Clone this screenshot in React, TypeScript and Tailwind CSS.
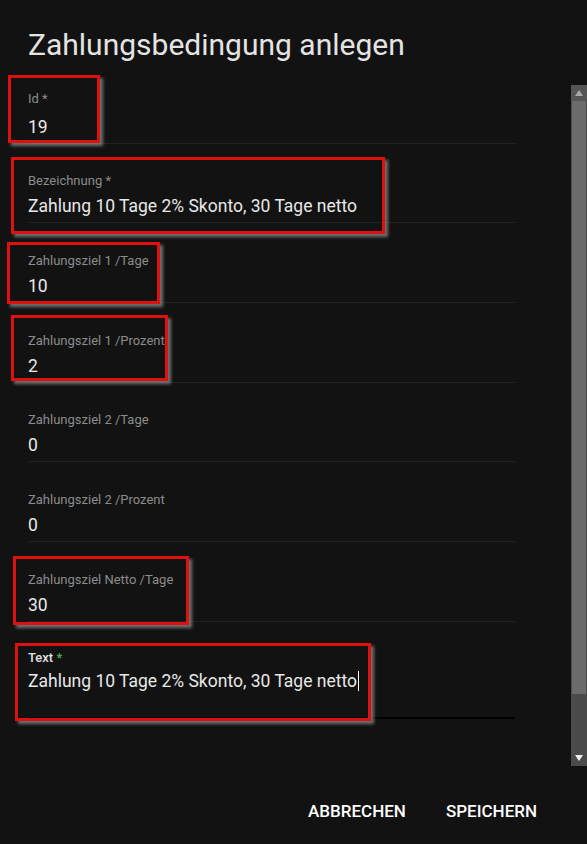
import React from "react";

type Field = {
  label: string;
  value: string;
  required?: boolean;
  pt: string;
};

const fields: Field[] = [
  { label: "Bezeichnung", value: "Zahlung 10 Tage 2% Skonto, 30 Tage netto", required: true, pt: "pt-[30px]" },
  { label: "Zahlungsziel 1 /Tage", value: "10", pt: "pt-[31px]" },
  { label: "Zahlungsziel 1 /Prozent", value: "2", pt: "pt-[31px]" },
  { label: "Zahlungsziel 2 /Tage", value: "0", pt: "pt-[30px]" },
  { label: "Zahlungsziel 2 /Prozent", value: "0", pt: "pt-[31px]" },
  { label: "Zahlungsziel Netto /Tage", value: "30", pt: "pt-[31px]" },
];

// red annotation frames drawn over the screenshot
const marks = [
  { left: 8, top: 75, width: 92, height: 68 },
  { left: 11, top: 157, width: 374, height: 77 },
  { left: 7, top: 242, width: 153, height: 62 },
  { left: 11, top: 315, width: 157, height: 66 },
  { left: 13, top: 556, width: 176, height: 69 },
  { left: 15, top: 643, width: 356, height: 78 },
];

function Scrollbar() {
  return (
    <div className="flex w-4 flex-col bg-[#4b4b4b]">
      <div className="flex h-4 items-center justify-center bg-[#555]">
        <svg width="8" height="6" viewBox="0 0 8 6">
          <path d="M4 0 L8 6 L0 6 Z" fill="#a8a8a8" />
        </svg>
      </div>
      <div className="mx-[1px] h-[593px] bg-[#6c6c6c]" />
      <div className="flex-1" />
      <div className="flex h-4 items-center justify-center">
        <svg width="8" height="6" viewBox="0 0 8 6">
          <path d="M0 0 L8 0 L4 6 Z" fill="#f0f0f0" />
        </svg>
      </div>
    </div>
  );
}

export default function App() {
  return (
    <div
      className="relative h-[844px] w-[587px] overflow-hidden bg-[#121212] text-[#e8e8e8]"
      style={{ fontFamily: "Roboto, 'Liberation Sans', sans-serif" }}
    >
      <div className="h-[85px] pl-[28px] pt-[27px]">
        <h1 className="text-[30px] leading-[36px] font-normal text-[#e4e4e4]">Zahlungsbedingung anlegen</h1>
      </div>

      <div className="flex h-[681px]">
        <div className="flex-1 pl-[28px] pr-[56px]">
          <div className="border-b border-[#222] pt-[7px] pb-[6px]">
            <div className="text-[13px] leading-[14px] text-[#8c8c8c]">Id *</div>
            <div className="mt-[11px] text-[17.5px] leading-[20px]">19</div>
          </div>

          {fields.map((f) => (
            <div key={f.label} className={`border-b border-[#222] pb-[6px] ${f.pt}`}>
              <div className="text-[13px] leading-[14px] text-[#8c8c8c]">
                {f.label}
                {f.required ? " *" : ""}
              </div>
              <div className="mt-[8px] text-[17.5px] leading-[20px]">{f.value}</div>
            </div>
          ))}

          <div className="border-b-2 border-black pt-[29px] pb-[26px]">
            <div className="text-[13px] leading-[14px] font-medium text-[#e0e0e0]">
              Text <span className="text-[#4caf50]">*</span>
            </div>
            <div className="mt-[6px] flex items-center text-[17.5px] leading-[20px]">
              Zahlung 10 Tage 2% Skonto, 30 Tage netto
              <span className="ml-[1px] inline-block h-[20px] w-[1px] bg-white" />
            </div>
          </div>
        </div>
        <Scrollbar />
      </div>

      <div className="flex justify-end gap-[24px] pr-[42px] pt-[29px]">
        <button className="px-[8px] py-[6px] text-[17px] leading-[20px] font-medium text-white">ABBRECHEN</button>
        <button className="px-[8px] py-[6px] text-[17px] leading-[20px] font-medium text-white">SPEICHERN</button>
      </div>

      {marks.map((m, i) => (
        <div
          key={i}
          className="pointer-events-none absolute border-[3px] border-[#e01010] shadow-[3px_3px_3px_rgba(150,150,150,0.7)]"
          style={{ left: m.left, top: m.top, width: m.width, height: m.height }}
        />
      ))}
    </div>
  );
}
